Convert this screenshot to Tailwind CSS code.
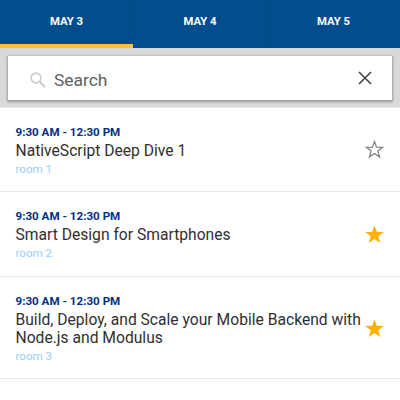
<!DOCTYPE html>
<html lang="en">
<head>
<meta charset="utf-8">
<title>Sessions</title>
<script src="https://cdn.jsdelivr.net/npm/@tailwindcss/browser@4"></script>
</head>
<body class="w-[400px] h-[400px] overflow-hidden bg-white font-['Roboto',sans-serif]">
<div class="flex flex-col h-[400px] overflow-hidden">
  <nav class="flex shrink-0 h-12 bg-[#034d8c] text-white text-[11.3px] font-bold leading-[43px] text-center">
    <div class="w-[133px] border-b-4 border-[#fcc339]">MAY 3</div>
    <div class="w-[134px] border-x border-[#03457f]">MAY 4</div>
    <div class="w-[133px]">MAY 5</div>
  </nav>
  <div class="shrink-0 h-[60px] pt-2 px-2 bg-[#d9d9d9] border-b border-[#e6e6e6]">
    <div class="flex items-center h-11 w-[384px] bg-white shadow-[0_1px_2px_1px_rgba(0,0,0,0.28)] pl-[22px] pr-5">
      <svg class="mt-[3px] w-4 h-4 shrink-0" viewBox="0 0 16 16" fill="none" stroke="#cccccc" stroke-width="1.7"><circle cx="6" cy="6" r="4.9"/><path d="M9.6 9.6L15 15" stroke-width="2"/></svg>
      <span class="ml-2 mt-[3px] text-[17.4px] leading-5 text-[#606060]">Search</span>
      <svg class="ml-auto w-[14px] h-[14px] -mt-px shrink-0" viewBox="0 0 14 14" fill="none" stroke="#444" stroke-width="1.6"><path d="M1 1L13 13M13 1L1 13"/></svg>
    </div>
  </div>
  <ul class="flex flex-col shrink-0">
    <li class="flex h-[84px] pl-[15.5px] pr-4 pt-[17px] border-b border-[#e8e8e8]">
      <div class="w-[349.5px] shrink-0">
        <p class="text-[11.6px] leading-[15px] font-bold text-[#023084]">9:30 AM - 12:30 PM</p>
        <p class="mt-0.5 text-[15.65px] leading-[18px] text-[#2f2f2f]">NativeScript Deep Dive 1</p>
        <p class="mt-0.5 text-[11.6px] leading-[14px] text-[#98cefa]">room 1</p>
      </div>
      <svg class="mt-[15px] w-[19px] h-[19px] shrink-0" viewBox="0 0 19 19" fill="none" stroke="#808080" stroke-width="1.2"><path d="M9.5 1.5L11.5 7.2L17.7 7.3L12.8 11L14.6 17L9.5 13.5L4.4 17L6.2 11L1.3 7.3L7.5 7.2Z"/></svg>
    </li>
    <li class="flex h-[85px] pl-[15.5px] pr-4 pt-[17px] border-b border-[#e8e8e8]">
      <div class="w-[349.5px] shrink-0">
        <p class="text-[11.6px] leading-[15px] font-bold text-[#023084]">9:30 AM - 12:30 PM</p>
        <p class="mt-0.5 text-[15.65px] leading-[18px] text-[#2f2f2f]">Smart Design for Smartphones</p>
        <p class="mt-0.5 text-[11.6px] leading-[14px] text-[#98cefa]">room 2</p>
      </div>
      <svg class="mt-4 w-[19px] h-[19px] shrink-0" viewBox="0 0 19 19" fill="#ffb000"><path d="M9.5 0.5L11.8 6.8L18.8 7L13.3 11.2L15.2 18L9.5 14.1L3.8 18L5.7 11.2L0.2 7L7.2 6.8Z"/></svg>
    </li>
    <li class="flex h-[102px] pl-[15.5px] pr-4 pt-[17px] border-b border-[#e8e8e8]">
      <div class="w-[349.5px] shrink-0">
        <p class="text-[11.6px] leading-[15px] font-bold text-[#023084]">9:30 AM - 12:30 PM</p>
        <p class="mt-0.5 text-[15.65px] leading-[18px] text-[#2f2f2f] whitespace-nowrap">Build, Deploy, and Scale your Mobile Backend with<br>Node.js and Modulus</p>
        <p class="mt-0.5 text-[11.6px] leading-[14px] text-[#98cefa]">room 3</p>
      </div>
      <svg class="mt-[25px] w-[19px] h-[19px] shrink-0" viewBox="0 0 19 19" fill="#ffb000"><path d="M9.5 0.5L11.8 6.8L18.8 7L13.3 11.2L15.2 18L9.5 14.1L3.8 18L5.7 11.2L0.2 7L7.2 6.8Z"/></svg>
    </li>
    <li class="flex h-[84px] pl-[15.5px] pr-4 pt-[18px]">
      <p class="text-[11.6px] leading-[15px] font-bold text-[#023084]">1:30 PM - 4:30 PM</p>
    </li>
  </ul>
</div>
</body>
</html>
